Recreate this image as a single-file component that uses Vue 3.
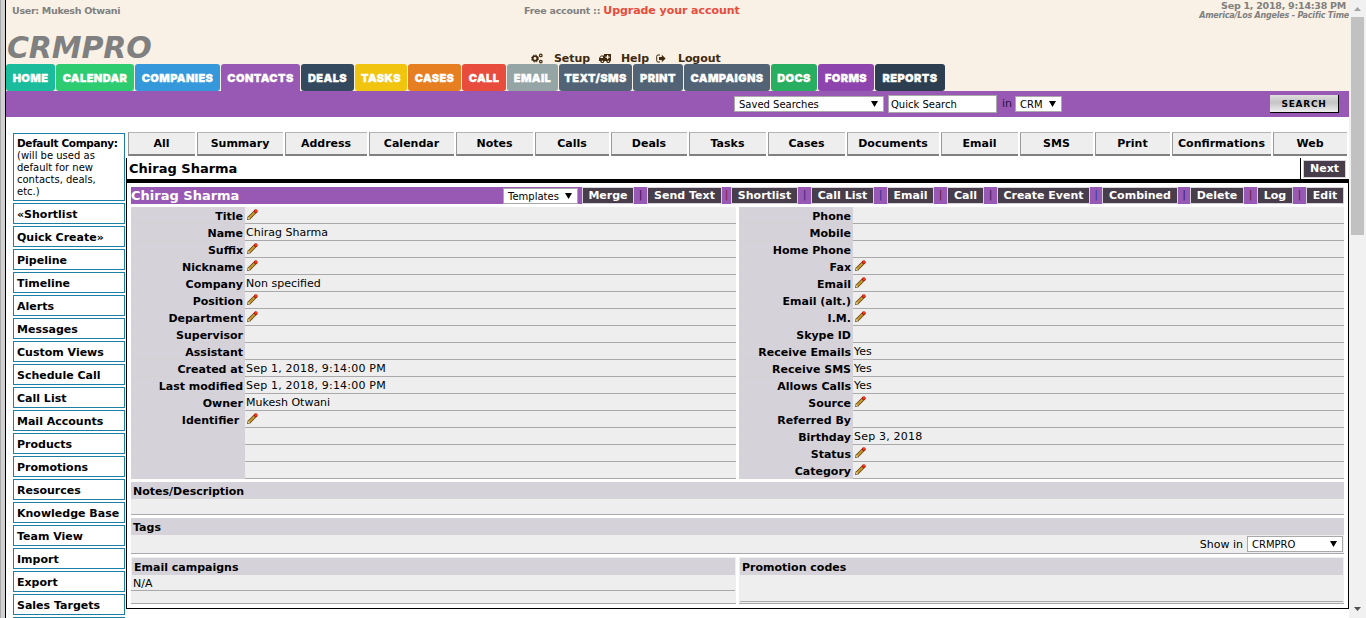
<script setup>
const nav = [
  ['HOME', 49, '#1abc9c'], ['CALENDAR', 78, '#2ecc71'], ['COMPANIES', 85, '#3498db'],
  ['CONTACTS', 79, '#9859b5'], ['DEALS', 53, '#34495e'], ['TASKS', 52, '#f1c40f'],
  ['CASES', 53, '#e67e22'], ['CALL', 44, '#e74c3c'], ['EMAIL', 51, '#95a5a6'],
  ['TEXT/SMS', 73, '#526375'], ['PRINT', 50, '#526375'], ['CAMPAIGNS', 86, '#526375'],
  ['DOCS', 46, '#27ae60'], ['FORMS', 56, '#8e44ad'], ['REPORTS', 70, '#2c3e50'],
]
const tabs = [
  ['All', 67], ['Summary', 86], ['Address', 82], ['Calendar', 85], ['Notes', 77], ['Calls', 74],
  ['Deals', 76], ['Tasks', 77], ['Cases', 77], ['Documents', 92], ['Email', 77], ['SMS', 73],
  ['Print', 75], ['Confirmations', 99], ['Web', 74],
]
const side = [
  '«Shortlist', 'Quick Create»', 'Pipeline', 'Timeline', 'Alerts', 'Messages', 'Custom Views',
  'Schedule Call', 'Call List', 'Mail Accounts', 'Products', 'Promotions', 'Resources',
  'Knowledge Base', 'Team View', 'Import', 'Export', 'Sales Targets', '',
]
const actions = [
  ['Merge', 52, 13, '#3a0f5a'], ['Send Text', 75, 9, '#8a1f3a'], ['Shortlist', 67, 13, '#3a2a7a'],
  ['Call List', 63, 13, '#2f2f9a'], ['Email', 47, 13, '#6a1a3a'], ['Call', 37, 13, '#3a1a5a'],
  ['Create Event', 93, 12, '#2f3fa0'], ['Combined', 76, 12, '#3a1a6a'], ['Delete', 54, 13, '#6a1a3a'],
  ['Log', 36, 13, '#7a1a2a'], ['Edit', 38, 0, ''],
]
const P = true
const left = [
  ['Title', P], ['Name', 'Chirag Sharma'], ['Suffix', P], ['Nickname', P], ['Company', 'Non specified'],
  ['Position', P], ['Department', P], ['Supervisor', ''], ['Assistant', ''],
  ['Created at', 'Sep 1, 2018, 9:14:00 PM'], ['Last modified', 'Sep 1, 2018, 9:14:00 PM'],
  ['Owner', 'Mukesh Otwani'], ['Identifier\u00a0', P], ['', ''], ['', ''], ['', ''],
]
const right = [
  ['Phone', ''], ['Mobile', ''], ['Home Phone', ''], ['Fax', P], ['Email', P], ['Email (alt.)', P],
  ['I.M.', P], ['Skype ID', ''], ['Receive Emails', 'Yes'], ['Receive SMS', 'Yes'], ['Allows Calls', 'Yes'],
  ['Source', P], ['Referred By', ''], ['Birthday', 'Sep 3, 2018'], ['Status', P], ['Category', P],
]
</script>

<template>
  <div class="page">
    <div class="edge"></div>
    <div class="content">
      <header>
        <div class="user">User: Mukesh Otwani</div>
        <div class="plan">Free account :: <b>Upgrade your account</b></div>
        <div class="clock">
          <div>Sep 1, 2018, 9:14:38 PM</div>
          <i>America/Los Angeles - Pacific Time</i>
        </div>
        <div class="brand">CRMPRO</div>
        <div class="links">
          <svg class="gears" width="12" height="11" viewBox="0 0 12 11" fill="none" stroke="#402a10">
            <circle cx="4" cy="5.5" r="2.3" stroke-width="1.8" />
            <circle cx="4" cy="5.5" r="3.5" stroke-width="1" stroke-dasharray="1.5 1.25" />
            <circle cx="9.8" cy="2.4" r="1.3" stroke-width="1.2" />
            <circle cx="9.8" cy="8.6" r="1.3" stroke-width="1.2" />
          </svg>
          <span class="setup">Setup</span>
          <svg class="truck" width="12" height="11" viewBox="0 0 12 11">
            <path fill="#402a10" fill-rule="evenodd" d="M5 1h7v7H0V5l2-2.500h3zM2.200 3.500 1 5h3V3.500zM8 2v1.500H6.500v1.200H8v1.500h1.200V4.700h1.500V3.500H9.200V2z" />
            <circle cx="3.300" cy="8.200" r="1.900" fill="#402a10" /><circle cx="9.300" cy="8.200" r="1.900" fill="#402a10" />
            <circle cx="3.300" cy="8.200" r=".7" fill="#f9f1e5" /><circle cx="9.300" cy="8.200" r=".7" fill="#f9f1e5" />
          </svg>
          <span class="help">Help</span>
          <svg class="exit" width="10" height="9" viewBox="0 0 10 9">
            <path fill="none" stroke="#402a10" d="M4 1H2Q.7 1 .7 2.300V6.700Q.7 8 2 8h2" />
            <path fill="#402a10" d="M3 3h2.800V.8L9.600 4.500 5.800 8.200V6H3z" />
          </svg>
          <span>Logout</span>
        </div>
        <nav>
          <a v-for="n in nav" :key="n[0]" :class="{ active: n[0] === 'CONTACTS' }" :style="{ width: n[1] + 'px', background: n[2] }">{{ n[0] }}</a>
        </nav>
      </header>
      <div class="search">
        <span class="select saved">Saved Searches<i></i></span>
        <span class="select quick">Quick Search</span>
        <span class="in">in</span>
        <span class="select crm">CRM<i></i></span>
        <button>SEARCH</button>
      </div>
      <div class="body">
        <aside>
          <div class="default"><b>Default Company:</b><br>(will be used as<br>default for new<br>contacts, deals,<br>etc.)</div>
          <div v-for="s in side" :key="s" class="item">{{ s }}</div>
        </aside>
        <main>
          <div class="tabs">
            <a v-for="t in tabs" :key="t[0]" :style="{ width: t[1] + 'px' }">{{ t[0] }}</a>
          </div>
          <div class="heading">
            <h1>Chirag Sharma</h1>
            <div class="nextcell"><span class="btn">Next</span></div>
          </div>
          <section class="panel">
            <div class="title">
              <h2>Chirag Sharma</h2>
              <span class="select templates">Templates<i></i></span>
              <template v-for="a in actions" :key="a[0]">
                <span class="btn" :style="{ width: a[1] + 'px' }">{{ a[0] }}</span>
                <span v-if="a[2]" class="sep" :style="{ width: a[2] + 'px', color: a[3] }">|</span>
              </template>
            </div>
            <div class="cols">
              <div v-for="(rows, k) in [left, right]" :key="k" class="table">
                <div v-for="(r, i) in rows" :key="i" class="row">
                  <div class="label">{{ r[0] }}</div>
                  <div class="value" :class="{ date: r[1] !== true && r[1].includes('2018') }">
                    <svg v-if="r[1] === true" width="11" height="11" viewBox="0 0 11 11">
                      <path d="M1.800 9.200 8.800 2.200" stroke="#5e4210" stroke-width="3.600" />
                      <path d="M0 11 .8 7.600 3.400 10.200z" fill="#5e4210" />
                      <path d="M2 9 8 3" stroke="#c8962c" stroke-width="2.200" />
                      <path d="M1.200 9.800 2.400 8.600" stroke="#f0d9a0" stroke-width="1.600" />
                      <circle cx="8.800" cy="2.200" r="1.900" fill="#b81c08" />
                      <circle cx="9" cy="2" r="1.100" fill="#ff4420" />
                    </svg>
                    <template v-else>{{ r[1] }}</template>
                  </div>
                </div>
              </div>
            </div>
            <div class="block notes"><h3>Notes/Description</h3></div>
            <div class="block tags">
              <h3>Tags</h3>
              <div class="show">Show in <span class="select">CRMPRO<i></i></span></div>
            </div>
            <div class="cols bottom">
              <div class="card"><h3>Email campaigns</h3><div class="na">N/A</div></div>
              <div class="card"><h3>Promotion codes</h3><div class="blank"></div></div>
            </div>
          </section>
        </main>
      </div>
    </div>
    <div class="scroll"><i class="up"></i><div class="thumb"></div><i class="down"></i></div>
  </div>
</template>

<style>
body { margin: 0; overflow: hidden; }
</style>

<style scoped>
* { box-sizing: border-box; }
.page { display: flex; width: 1366px; height: 618px; overflow: hidden; background: #fff; color: #000; font: 11px/14px "DejaVu Sans", Verdana, sans-serif; white-space: nowrap; }
.edge { flex: none; width: 6px; background: #d0d0d0; border-left: 1px solid #a8a8a8; border-right: 1px solid #000; }
.content { width: 1343px; flex: none; overflow: hidden; }
header { position: relative; height: 91px; background: #f9f1e5; color: #808080; font-weight: bold; display: flex; flex-direction: column; justify-content: flex-end; }
.user { position: absolute; left: 6px; top: 4px; font-size: 9.500px; letter-spacing: -.3px; }
.plan { position: absolute; left: 518px; top: 4px; font-size: 9.500px; letter-spacing: -.25px; }
.plan b { font-size: 11px; color: #e74c3c; letter-spacing: -.05px; }
.clock { position: absolute; right: 0; top: 0; text-align: right; font-size: 9.500px; letter-spacing: -.25px; line-height: 12px; }
.clock div { padding-right: 3px; }
.clock i { display: block; font-size: 8px; line-height: 8px; letter-spacing: -.2px; }
.brand { position: absolute; left: 1px; top: 32px; font-size: 30px; line-height: 32px; font-style: italic; letter-spacing: -.15px; }
.links { position: absolute; left: 525px; top: 50px; display: flex; align-items: center; color: #402a10; letter-spacing: -.08px; }
.links span { padding-top: 2px; }
.setup { margin: 0 9px 0 11px; }
.help { margin: 0 7px 0 10px; }
.exit { margin-right: 12px; }
nav { display: flex; gap: 1px; }
nav a { height: 27px; border-radius: 3px; color: #fff; font: 900 11px/28px Inter, sans-serif; letter-spacing: .4px; text-align: center; -webkit-text-stroke: .3px #fff; }
nav .active { border-radius: 3px 3px 0 0; }
.search { height: 26px; background: #9859b5; display: flex; align-items: center; padding-left: 728px; }
.select { display: flex; align-items: center; justify-content: space-between; background: #fff; border: 1px solid #a9a9a9; color: #000; font-size: 10px; line-height: 17px; height: 16px; padding: 0 5px 0 4px; }
.select i { width: 7px; height: 6px; background: #000; clip-path: polygon(0 0, 100% 0, 50% 100%); }
.saved { width: 150px; margin-right: 4px; }
.quick { width: 109px; height: 18px; padding-left: 2px; margin-right: 5px; }
.in { width: 13px; color: #2a1035; }
.crm { width: 47px; }
.search button { margin-left: 208px; width: 69px; height: 18px; padding: 0; border: 0; border-right: 1px solid #000; border-bottom: 1px solid #000; background: linear-gradient(#ddd, #c4c4c4 45%, #eee); font: bold 9px/16px "DejaVu Sans", sans-serif; letter-spacing: .7px; }
.body { display: flex; }
aside { width: 120px; flex: none; padding: 16px 1px 0 7px; display: flex; flex-direction: column; gap: 2px; }
.default { height: 68px; border: 1px solid #1e7fa6; padding: 3px 3px; font-size: 10px; line-height: 12px; }
.default b { font-size: 10.500px; letter-spacing: -.35px; }
.item { height: 21px; flex: none; border: 1px solid #1e7fa6; padding: 0 3px; font-weight: bold; line-height: 21px; }
main { flex: 1; padding-top: 15px; }
.tabs { display: flex; gap: 2px; padding-left: 2px; height: 26px; }
.tabs a { height: 24px; flex: none; background: #eee; border-top: 1px solid #b4b4b4; border-left: 1px solid #999; border-bottom: 2px solid #808080; font-weight: bold; line-height: 21px; text-align: center; padding-right: 1px; }
.heading { display: flex; justify-content: space-between; height: 25px; border-left: 1px solid #000; border-bottom: 4px solid #000; }
h1, h2, h3 { margin: 0; font-size: 11px; }
h1 { font-size: 13px; line-height: 21px; padding-left: 2px; }
.nextcell { width: 49px; border-left: 1px solid #000; padding: 2px; }
.nextcell .btn { width: 43px; height: 18px; }
.btn { display: block; flex: none; height: 17px; border: 1px solid #d6d2da; background: #473d4b; color: #fff; font-weight: bold; line-height: 16px; text-align: center; }
.panel { width: 1223px; border: 1px solid #000; border-top: 0; height: 426px; padding: 4px 4px 0; }
.title { display: flex; height: 17px; background: #9859b5; }
h2 { flex: 1; font-size: 13px; line-height: 17px; color: #fff; }
.templates { width: 75px; margin: 1px 4px 0 0; }
.sep { flex: none; text-align: center; line-height: 16px; }
.cols { display: flex; gap: 3px; margin-top: 3px; }
.table, .card { width: 605px; }
.row { display: flex; height: 17px; }
.label { width: 114px; background: #d6d2da; border-bottom: 1px solid #d4d1d4; text-align: right; padding-right: 2px; font-weight: bold; line-height: 19px; }
.value { flex: 1; background: #eee; border-bottom: 1px solid #a9a9a9; padding-left: 1px; line-height: 17px; }
.date { letter-spacing: .2px; }
.value svg { display: block; margin: 2px 0 0 1px; }
.block { margin-top: 3px; background: #eee; border-bottom: 1px solid #a9a9a9; }
h3 { height: 17px; background: #d6d2da; line-height: 19px; padding-left: 2px; }
.notes { height: 33px; }
.tags { height: 36px; }
.show { display: flex; justify-content: flex-end; gap: 4px; padding: 1px 1px 0 0; line-height: 17px; }
.show .select { width: 96px; }
.bottom { margin-top: 3px; }
.card { height: 47px; background: #eee; border-bottom: 1px solid #a9a9a9; padding: 1px 1px 0; }
.na { height: 16px; margin-left: -1px; padding-left: 2px; line-height: 17px; border-bottom: 1px solid #a9a9a9; }
.blank { height: 27px; border-bottom: 1px solid #a9a9a9; }
.scroll { flex: 1; background: #f1f1f1; display: flex; flex-direction: column; align-items: center; }
.scroll i { width: 7px; height: 4px; background: #505050; clip-path: polygon(0 0, 100% 0, 50% 100%); }
.scroll .up { margin: 7px 0 6px; background: #a3a3a3; clip-path: polygon(0 100%, 100% 100%, 50% 0); }
.thumb { width: 13px; height: 218px; background: #c1c1c1; }
.scroll .down { margin-top: 372px; }
</style>
